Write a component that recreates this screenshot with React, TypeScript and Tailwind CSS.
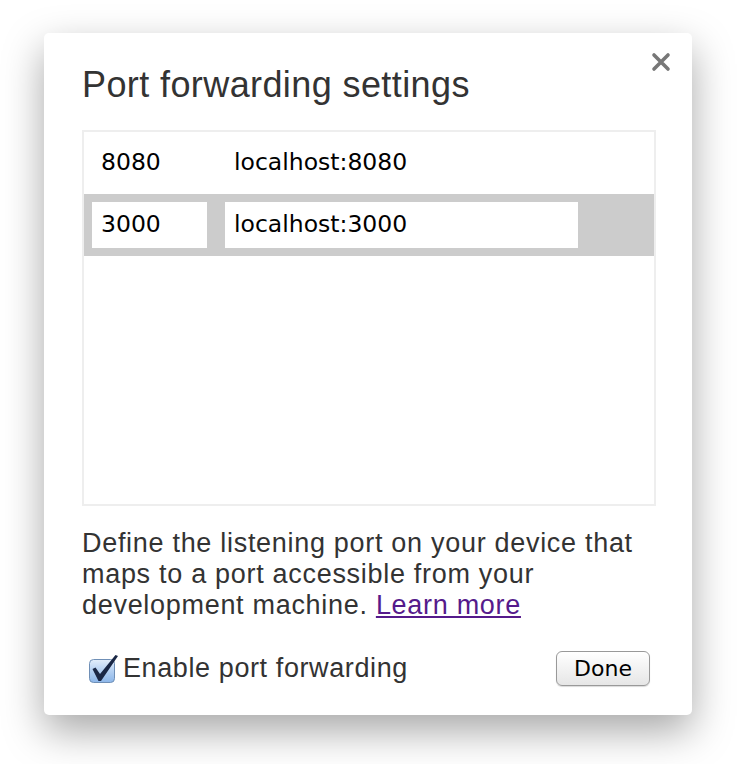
import React from 'react';

const rows = [
  { port: '8080', address: 'localhost:8080', editing: false },
  { port: '3000', address: 'localhost:3000', editing: true },
];

const CloseIcon = () => (
  <svg width="20" height="20" viewBox="0 0 20 20">
    <path d="M3 3 L17 17 M17 3 L3 17" stroke="#777" strokeWidth="3.6" strokeLinecap="round" />
  </svg>
);

const CheckIcon = () => (
  <svg width="32" height="32" viewBox="0 0 32 32">
    <defs>
      <linearGradient id="cb" x1="0" y1="0" x2="0" y2="1">
        <stop offset="0" stopColor="#e4eefb" />
        <stop offset="0.5" stopColor="#b4d0f2" />
        <stop offset="1" stopColor="#8cb6e9" />
      </linearGradient>
    </defs>
    <rect x="1.5" y="7.5" width="25" height="23" rx="4" fill="url(#cb)" stroke="#6f8fb6" />
    <path d="M4.5 17 L7.5 15.5 L12 22 L27.5 3 L30 4 L13 29 L10.5 29 Z" fill="#1a2745" />
  </svg>
);

export default function App() {
  return (
    <div className="min-h-[764px] bg-white pl-[44px] pt-[33px]" style={{ fontFamily: '"Liberation Sans", Arial, sans-serif' }}>
      <div className="relative w-[648px] h-[682px] bg-white rounded-[5px] shadow-[0_16px_40px_rgba(0,0,0,0.35)] pt-[31px] pl-[38px]">
        <button className="absolute right-[21px] top-[19px]">
          <CloseIcon />
        </button>

        <h1 className="text-[36px] leading-[42px] tracking-[0.4px] text-[#333]">Port forwarding settings</h1>

        <div className="mt-[24px] w-[574px] h-[376px] border-2 border-[#eeeeee]" style={{ fontFamily: '"DejaVu Sans", sans-serif' }}>
          {rows.map((row) => (
            <div
              key={row.port}
              className={`flex items-center gap-[18px] h-[62px] pl-[8px] text-[23.5px] text-black ${row.editing ? 'bg-[#cccccc]' : ''}`}
            >
              <div className={`w-[115px] h-[46px] flex items-center pl-[9px] ${row.editing ? 'bg-white' : ''}`}>{row.port}</div>
              <div className={`w-[353px] h-[46px] flex items-center pl-[9px] ${row.editing ? 'bg-white' : ''}`}>{row.address}</div>
            </div>
          ))}
        </div>

        <p className="mt-[22px] text-[27px] leading-[31px] tracking-[0.7px] text-[#333]">
          Define the listening port on your device that<br />
          maps to a port accessible from your<br />
          development machine. <a href="#" className="text-[#551a8b] underline">Learn more</a>
        </p>

        <div className="mt-[27px] flex items-center justify-between w-[568px]">
          <label className="ml-[6px] flex items-center gap-[3px] text-[27px] tracking-[0.6px] text-[#333]">
            <CheckIcon />
            Enable port forwarding
          </label>
          <button
            className="w-[94px] h-[35px] rounded-[6px] border border-[#999] bg-gradient-to-b from-[#ffffff] to-[#e6e6e6] text-[22px] text-black shadow-[0_1px_1px_rgba(0,0,0,0.15)]"
            style={{ fontFamily: '"DejaVu Sans", sans-serif' }}
          >
            Done
          </button>
        </div>
      </div>
    </div>
  );
}
